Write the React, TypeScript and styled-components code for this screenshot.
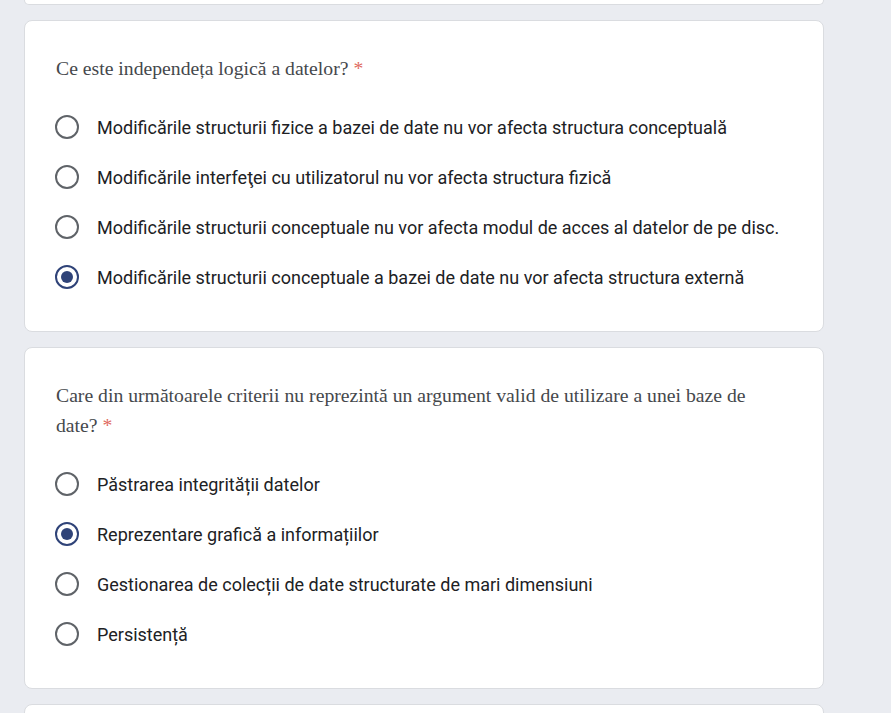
import React from 'react';
import styled, { createGlobalStyle } from 'styled-components';

const GlobalStyle = createGlobalStyle`
  html, body {
    margin: 0;
    padding: 0;
    background: #eaecf1;
  }
  body {
    font-family: Roboto, "Liberation Sans", sans-serif;
  }
`;

const Page = styled.div`
  width: 891px;
  height: 713px;
  overflow: hidden;
  box-sizing: border-box;
  padding: 0 0 0 24px;
  display: flex;
  flex-direction: column;
  gap: 15px;
`;

const Card = styled.div`
  width: 800px;
  box-sizing: border-box;
  background: #ffffff;
  border: 1px solid #dadce0;
  border-radius: 8px;
  padding: 32px 32px 29px 30px;
  flex-shrink: 0;
`;

const CardTail = styled(Card)`
  height: 5px;
  padding: 0;
  border-top: none;
  border-radius: 0 0 8px 8px;
`;

const Question = styled.div`
  font-family: "Liberation Serif", "DejaVu Serif", serif;
  font-size: 19.7px;
  line-height: 30px;
  color: #45484c;
  padding-left: 1px;
  margin-bottom: 19px;
`;

const Required = styled.span`
  color: #e06a60;
`;

const Options = styled.div`
  display: flex;
  flex-direction: column;
`;

const Option = styled.label`
  display: flex;
  align-items: center;
  gap: 18px;
  height: 50px;
  font-size: 18px;
  color: #202124;
  cursor: pointer;
`;

const Radio = styled.span<{ $checked?: boolean }>`
  width: 24px;
  height: 24px;
  box-sizing: border-box;
  border-radius: 50%;
  border: 2px solid ${p => (p.$checked ? '#2f4378' : '#5f6368')};
  display: flex;
  align-items: center;
  justify-content: center;
  flex-shrink: 0;

  &::after {
    content: '';
    width: 12px;
    height: 12px;
    border-radius: 50%;
    background: #2f4378;
    display: ${p => (p.$checked ? 'block' : 'none')};
  }
`;

type QuestionData = {
  title: string;
  options: string[];
  selected: number;
};

const questions: QuestionData[] = [
  {
    title: 'Ce este independeța logică a datelor?',
    options: [
      'Modificările structurii fizice a bazei de date nu vor afecta structura conceptuală',
      'Modificările interfeţei cu utilizatorul nu vor afecta structura fizică',
      'Modificările structurii conceptuale nu vor afecta modul de acces al datelor de pe disc.',
      'Modificările structurii conceptuale a bazei de date nu vor afecta structura externă',
    ],
    selected: 3,
  },
  {
    title:
      'Care din următoarele criterii nu reprezintă un argument valid de utilizare a unei baze de date?',
    options: [
      'Păstrarea integrității datelor',
      'Reprezentare grafică a informațiilor',
      'Gestionarea de colecții de date structurate de mari dimensiuni',
      'Persistență',
    ],
    selected: 1,
  },
];

const QuestionCard = ({ q }: { q: QuestionData }) => (
  <Card>
    <Question>
      {q.title} <Required>*</Required>
    </Question>
    <Options>
      {q.options.map((opt, i) => (
        <Option key={i}>
          <Radio $checked={i === q.selected} />
          {opt}
        </Option>
      ))}
    </Options>
  </Card>
);

export default function App() {
  return (
    <>
      <GlobalStyle />
      <Page>
        <CardTail />
        {questions.map((q, i) => (
          <QuestionCard key={i} q={q} />
        ))}
        <Card />
      </Page>
    </>
  );
}
